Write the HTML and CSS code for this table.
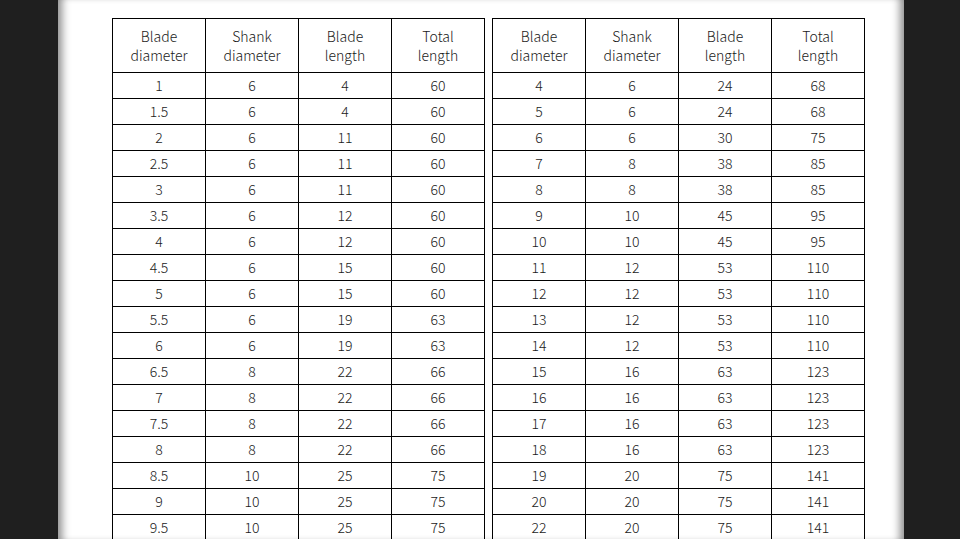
FILE: index.html
```html
<!DOCTYPE html>
<html>
<head>
<meta charset="utf-8">
<link rel="stylesheet" href="styles.css">
</head>
<body>
<div class="page">
  <div class="tables">
    <table class="spec">
      <thead>
        <tr><th>Blade<br>diameter</th><th>Shank<br>diameter</th><th>Blade<br>length</th><th>Total<br>length</th></tr>
      </thead>
      <tbody>
        <tr><td>1</td><td>6</td><td>4</td><td>60</td></tr>
        <tr><td>1.5</td><td>6</td><td>4</td><td>60</td></tr>
        <tr><td>2</td><td>6</td><td>11</td><td>60</td></tr>
        <tr><td>2.5</td><td>6</td><td>11</td><td>60</td></tr>
        <tr><td>3</td><td>6</td><td>11</td><td>60</td></tr>
        <tr><td>3.5</td><td>6</td><td>12</td><td>60</td></tr>
        <tr><td>4</td><td>6</td><td>12</td><td>60</td></tr>
        <tr><td>4.5</td><td>6</td><td>15</td><td>60</td></tr>
        <tr><td>5</td><td>6</td><td>15</td><td>60</td></tr>
        <tr><td>5.5</td><td>6</td><td>19</td><td>63</td></tr>
        <tr><td>6</td><td>6</td><td>19</td><td>63</td></tr>
        <tr><td>6.5</td><td>8</td><td>22</td><td>66</td></tr>
        <tr><td>7</td><td>8</td><td>22</td><td>66</td></tr>
        <tr><td>7.5</td><td>8</td><td>22</td><td>66</td></tr>
        <tr><td>8</td><td>8</td><td>22</td><td>66</td></tr>
        <tr><td>8.5</td><td>10</td><td>25</td><td>75</td></tr>
        <tr><td>9</td><td>10</td><td>25</td><td>75</td></tr>
        <tr><td>9.5</td><td>10</td><td>25</td><td>75</td></tr>
      </tbody>
    </table>
    <table class="spec">
      <thead>
        <tr><th>Blade<br>diameter</th><th>Shank<br>diameter</th><th>Blade<br>length</th><th>Total<br>length</th></tr>
      </thead>
      <tbody>
        <tr><td>4</td><td>6</td><td>24</td><td>68</td></tr>
        <tr><td>5</td><td>6</td><td>24</td><td>68</td></tr>
        <tr><td>6</td><td>6</td><td>30</td><td>75</td></tr>
        <tr><td>7</td><td>8</td><td>38</td><td>85</td></tr>
        <tr><td>8</td><td>8</td><td>38</td><td>85</td></tr>
        <tr><td>9</td><td>10</td><td>45</td><td>95</td></tr>
        <tr><td>10</td><td>10</td><td>45</td><td>95</td></tr>
        <tr><td>11</td><td>12</td><td>53</td><td>110</td></tr>
        <tr><td>12</td><td>12</td><td>53</td><td>110</td></tr>
        <tr><td>13</td><td>12</td><td>53</td><td>110</td></tr>
        <tr><td>14</td><td>12</td><td>53</td><td>110</td></tr>
        <tr><td>15</td><td>16</td><td>63</td><td>123</td></tr>
        <tr><td>16</td><td>16</td><td>63</td><td>123</td></tr>
        <tr><td>17</td><td>16</td><td>63</td><td>123</td></tr>
        <tr><td>18</td><td>16</td><td>63</td><td>123</td></tr>
        <tr><td>19</td><td>20</td><td>75</td><td>141</td></tr>
        <tr><td>20</td><td>20</td><td>75</td><td>141</td></tr>
        <tr><td>22</td><td>20</td><td>75</td><td>141</td></tr>
      </tbody>
    </table>
  </div>
</div>
</body>
</html>
```
FILE: styles.css
```css
html, body {
  margin: 0;
  padding: 0;
  height: 100%;
  overflow: hidden;
  background: #1f1f1f;
}
.page {
  margin-left: 58px;
  width: 846px;
  height: 100%;
  background: #fff;
  box-shadow: inset 10px 0 8px -6px rgba(0,0,0,0.45), inset -10px 0 8px -6px rgba(0,0,0,0.45);
  padding: 18px 0 0 54px;
  box-sizing: border-box;
}
.tables {
  display: flex;
  gap: 7px;
  align-items: flex-start;
}
.spec {
  border-collapse: collapse;
  table-layout: fixed;
  width: 373px;
  font-family: "Noto Sans CJK SC", "Noto Sans", sans-serif;
  font-size: 14px;
  font-weight: 300;
  color: #1a1a1a;
}
.spec th, .spec td {
  border: 1px solid #000;
  width: 92px;
  padding: 0;
  text-align: center;
  font-weight: 300;
}
.spec th {
  height: 52px;
  line-height: 19px;
  padding-top: 1px;
}
.spec td {
  height: 25px;
  line-height: 25px;
}
```
